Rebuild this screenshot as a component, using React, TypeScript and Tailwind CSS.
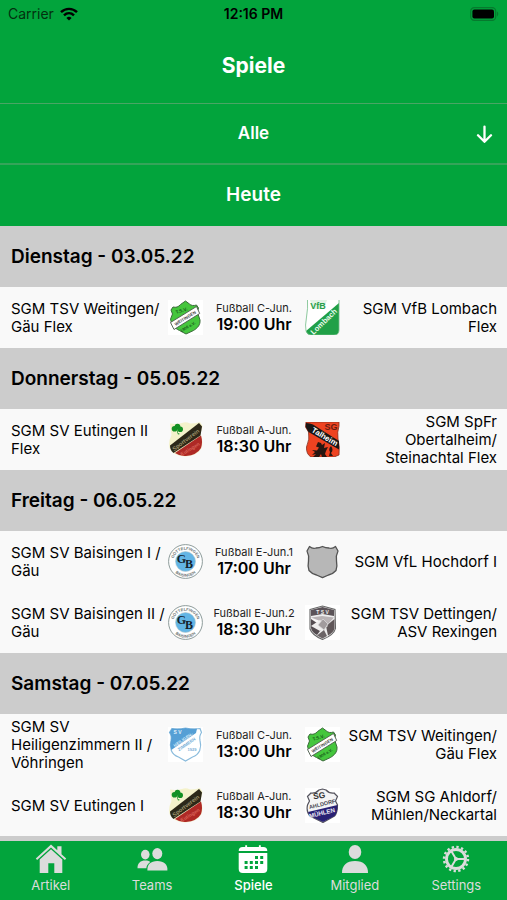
import type { ReactNode } from "react";

type Match = {
  home: string;
  away: string;
  homeCrest: ReactNode;
  awayCrest: ReactNode;
  league: string;
  time: string;
};

type Day = { title: string; matches: Match[] };

const days: Day[] = [
  {
    title: "Dienstag - 03.05.22",
    matches: [
      {
        home: "SGM TSV Weitingen/ Gäu Flex",
        away: "SGM VfB Lombach Flex",
        homeCrest: <WeitingenCrest />,
        awayCrest: <LombachCrest />,
        league: "Fußball C-Jun.",
        time: "19:00 Uhr",
      },
    ],
  },
  {
    title: "Donnerstag - 05.05.22",
    matches: [
      {
        home: "SGM SV Eutingen II Flex",
        away: "SGM SpFr Obertalheim/ Steinachtal Flex",
        homeCrest: <EutingenCrest />,
        awayCrest: <TalheimCrest />,
        league: "Fußball A-Jun.",
        time: "18:30 Uhr",
      },
    ],
  },
  {
    title: "Freitag - 06.05.22",
    matches: [
      {
        home: "SGM SV Baisingen I / Gäu",
        away: "SGM VfL Hochdorf I",
        homeCrest: <BaisingenCrest id="baisingen-1" />,
        awayCrest: <EmptyCrest />,
        league: "Fußball E-Jun.1",
        time: "17:00 Uhr",
      },
      {
        home: "SGM SV Baisingen II / Gäu",
        away: "SGM TSV Dettingen/ ASV Rexingen",
        homeCrest: <BaisingenCrest id="baisingen-2" />,
        awayCrest: <DettingenCrest />,
        league: "Fußball E-Jun.2",
        time: "18:30 Uhr",
      },
    ],
  },
  {
    title: "Samstag - 07.05.22",
    matches: [
      {
        home: "SGM SV Heiligenzimmern II / Vöhringen",
        away: "SGM TSV Weitingen/ Gäu Flex",
        homeCrest: <HeiligenzimmernCrest />,
        awayCrest: <WeitingenCrest />,
        league: "Fußball C-Jun.",
        time: "13:00 Uhr",
      },
      {
        home: "SGM SV Eutingen I",
        away: "SGM SG Ahldorf/ Mühlen/Neckartal",
        homeCrest: <EutingenCrest />,
        awayCrest: <AhldorfCrest />,
        league: "Fußball A-Jun.",
        time: "18:30 Uhr",
      },
    ],
  },
];

const tabs = [
  { label: "Artikel", icon: <HomeIcon /> },
  { label: "Teams", icon: <PeopleIcon /> },
  { label: "Spiele", icon: <CalendarIcon />, active: true },
  { label: "Mitglied", icon: <PersonIcon /> },
  { label: "Settings", icon: <SettingsIcon /> },
];

export default function App() {
  return (
    <div className="flex h-screen flex-col overflow-hidden bg-[#cccccc] font-['Inter','Liberation_Sans',sans-serif] text-black">
      <header className="shrink-0 bg-[#02a43c] text-white">
        <StatusBar />
        <h1 className="flex h-[75px] items-center justify-center text-[21px] font-bold">
          Spiele
        </h1>
        <button
          type="button"
          aria-haspopup="listbox"
          className="grid h-[60px] w-full grid-cols-[1fr_auto_1fr] items-center border-t border-[#4aa565] px-[14px] text-[17px] font-semibold"
        >
          <span className="col-start-2">Alle</span>
          <ArrowDown />
        </button>
        <button
          type="button"
          className="h-[63px] w-full border-t-2 border-[#35a45a] text-[19px] font-semibold"
        >
          Heute
        </button>
      </header>

      <main className="min-h-0 flex-1 overflow-hidden">
        {days.map((day) => (
          <section key={day.title}>
            <h2 className="flex h-[61px] items-center px-[11px] pt-0.5 text-[19px] font-semibold">
              {day.title}
            </h2>
            <ul className="bg-[#f9f9f9]">
              {day.matches.map((match) => (
                <MatchRow key={match.home} match={match} />
              ))}
            </ul>
          </section>
        ))}
      </main>

      <nav className="grid h-[59px] shrink-0 grid-cols-5 bg-[#02a43c]">
        {tabs.map(({ label, icon, active }) => (
          <a
            key={label}
            href={`#${label.toLowerCase()}`}
            aria-current={active ? "page" : undefined}
            className={`flex flex-col items-center gap-0.5 pt-0.5 text-[13px] leading-4 ${
              active ? "font-medium text-white" : "text-[#dcdcdc]"
            }`}
          >
            {icon}
            {label}
          </a>
        ))}
      </nav>
    </div>
  );
}

function MatchRow({ match }: { match: Match }) {
  return (
    <li className="flex h-[61px] items-center pr-[10px] pl-[11px] text-[15px] leading-[18px]">
      <p className="flex-1">{match.home}</p>
      {match.homeCrest}
      <div className="w-[102px] pb-[3px] text-center whitespace-nowrap">
        <p className="text-[11px] leading-4 text-[#222]">{match.league}</p>
        <p className="text-base leading-4 font-semibold">{match.time}</p>
      </div>
      {match.awayCrest}
      <p className="flex-1 text-right">{match.away}</p>
    </li>
  );
}

function StatusBar() {
  return (
    <div className="grid h-7 grid-cols-3 items-center px-2 text-sm text-black">
      <div className="flex items-center gap-1.5">
        <span className="text-[#03300f]">Carrier</span>
        <svg width="18" height="14" viewBox="0 0 18 14" fill="none" stroke="currentColor" strokeWidth="2.4">
          <path d="M1 5.2C5.6.7 12.4.7 17 5.2" />
          <path d="M4 8.4c2.9-2.8 7.1-2.8 10 0" />
          <path d="M6.4 10.9c1.6-1.5 3.6-1.5 5.2 0L9 13.6z" fill="currentColor" stroke="none" />
        </svg>
      </div>
      <span className="text-center font-semibold">12:16 PM</span>
      <svg className="justify-self-end" width="29" height="14" viewBox="0 0 29 14">
        <rect x="0.7" y="0.7" width="25" height="12.6" rx="3.6" fill="none" stroke="#067a2e" strokeWidth="1.2" />
        <rect x="2.4" y="2.4" width="21.6" height="9.2" rx="2" />
        <path d="M27 4.6c1.7.8 1.7 4 0 4.8z" fill="#067a2e" />
      </svg>
    </div>
  );
}

function ArrowDown() {
  return (
    <svg
      className="justify-self-end"
      width="17"
      height="18"
      viewBox="0 0 17 18"
      fill="none"
      stroke="currentColor"
      strokeWidth="2.3"
      strokeLinecap="round"
      strokeLinejoin="round"
    >
      <path d="M8.5 1.6v15M2 10.2l6.5 6.6 6.5-6.6" />
    </svg>
  );
}

function TabIcon({ children }: { children: ReactNode }) {
  return (
    <svg width="32" height="32" viewBox="0 0 32 32" fill="currentColor" aria-hidden="true">
      {children}
    </svg>
  );
}

function HomeIcon() {
  return (
    <TabIcon>
      <path d="M16 1.600 22.300 7.300V3.200h4.200v8L31.200 15.400 29.900 16.900 16 4.400 2.100 16.900.8 15.400z" />
      <path d="M16 6.200 27.300 16.400V30H19.300V20.200H13.300V30H4.700V16.400z" />
    </TabIcon>
  );
}

function PeopleIcon() {
  return (
    <TabIcon>
      <ellipse cx="9.300" cy="11.600" rx="4.300" ry="4.800" />
      <path d="M1.500 25.200c0-5 3-7.600 7.800-7.600 2 0 3.700.5 5 1.400-2.300 1.500-3.600 3.500-4 6.200z" />
      <ellipse cx="21.300" cy="10.600" rx="5" ry="5.600" />
      <path d="M11.400 27.400c-.4-5.700 3.200-9.300 9.900-9.300s10.500 3.600 10.100 9.300z" />
    </TabIcon>
  );
}

function CalendarIcon() {
  return (
    <TabIcon>
      <path d="M8.200 2.200h1.900V4h11.800V2.200h1.900V4h2.500q4 0 4 4H1.700q0-4 4-4h2.500z" />
      <path
        fillRule="evenodd"
        d="M1.700 10h28.600v16q0 4-4 4H5.700q-4 0-4-4zM18 13v3h3v-3zm5.200 0v3h3v-3zM7.600 18v3h3v-3zm5.200 0v3h3v-3zm5.200 0v3h3v-3zm5.200 0v3h3v-3zM7.600 23v3h3v-3zm5.200 0v3h3v-3zm5.200 0v3h3v-3z"
      />
    </TabIcon>
  );
}

function PersonIcon() {
  return (
    <TabIcon>
      <ellipse cx="16" cy="9" rx="6.300" ry="7" />
      <path d="M3 30c-.2-7.400 4.600-12 13-12s13.200 4.600 13 12z" />
    </TabIcon>
  );
}

function SettingsIcon() {
  return (
    <TabIcon>
      <g fill="none" stroke="currentColor">
        <circle cx="16" cy="16" r="12" strokeWidth="2.400" strokeDasharray="2.350 2.362" />
        <circle cx="16" cy="16" r="9.500" strokeWidth="2.900" />
        <path d="M16 16h9M16 16l-4.700-8M16 16l-4.700 8" strokeWidth="2" />
      </g>
      <circle cx="16" cy="16" r="2" />
    </TabIcon>
  );
}

function Crest({ label, children }: { label: string; children: ReactNode }) {
  return (
    <svg
      role="img"
      aria-label={label}
      className="shrink-0 font-['Liberation_Sans',sans-serif] font-bold"
      width="35"
      height="35"
      viewBox="0 0 35 35"
      textAnchor="middle"
    >
      {children}
    </svg>
  );
}

function WeitingenCrest() {
  return (
    <Crest label="TSV Weitingen">
      <rect width="35" height="35" fill="#fff" />
      <path
        d="M5 7c3 .8 5.500 0 7.500-2.500L17.500 1l4 3c1.500 1.500 4 2 7 1l2 3-1.200 4 2.700 8c.5 5-2.500 8-6.500 10.500L18 34l-6.500-3.500C6 28 3 24 2.600 19L4.500 14 3 10z"
        fill="#45c63d"
        stroke="#3c6b3b"
        strokeWidth="1"
      />
      <path d="M2.500 22.500 28.500 6.500l3.200 7L6 29.500z" fill="#fff" stroke="#4b5a4b" strokeWidth=".9" />
      <text transform="translate(18 19.500) rotate(-32)" fontSize="4.300" fill="#444">WEITINGEN</text>
      <text transform="translate(14 12) rotate(-18)" fontSize="4.600" fill="#185a1b">T.S.V.</text>
      <text transform="translate(20.500 28) rotate(-30)" fontSize="4" fill="#185a1b">1906 e.V.</text>
    </Crest>
  );
}

function LombachCrest() {
  return (
    <Crest label="VfB Lombach">
      <path d="M2.500 0H34v30q0 5-5 5H6q-6 0-5.400-7Q1.200 22 2.500 17z" fill="#fff" />
      <path d="M34 3v27q0 5-5 5H6q-4 0-5-4Z" fill="#20a047" />
      <path d="M2.500 0q.6 8-1 17T1 31q1.300 4 5 4h23q5 0 5-5V0" fill="none" stroke="#72bd88" strokeWidth=".8" />
      <path d="M5 0h17l-3 9H8z" fill="#e3f3e6" />
      <text x="13" y="9" fontSize="9" fill="#2aa04b">VfB</text>
      <text transform="translate(20.500 23.500) rotate(-44)" fontSize="7.500" fill="#e8faeb">Lombach</text>
    </Crest>
  );
}

function EutingenCrest() {
  return (
    <Crest label="SV Eutingen">
      <path
        d="M2 1.500Q8 2.500 14 1q4-1.500 8 .5 5 0 10-1.500l2.500 4-2 8q3.500 9 .5 15-4 7-15.500 7.500Q5 34 1.500 26 0 20 3.500 13z"
        fill="#f4f2cb"
      />
      <path d="M33 13.500 7 31q5 3.500 11 3Q29 33 33 26q2-6 0-12.500z" fill="#ae2925" />
      <path d="M2 23.500 31 1l3 3.500-1.500 9L5.500 31Q2 28 2 23.500z" fill="#2c2818" />
      <g fill="#139022">
        <circle cx="9.500" cy="4.500" r="2.800" />
        <circle cx="6.500" cy="6.800" r="2.800" />
        <circle cx="12.200" cy="7.200" r="2.800" />
        <path d="m9 5 1 6 2 1-2 .5L8 7z" />
      </g>
      <text transform="translate(19 19.500) rotate(-37)" fontSize="5.800" fill="#9b9069">Sportverein</text>
      <text transform="translate(23 28.500) rotate(-31)" fontSize="5" fill="#d76358">Eutingen</text>
    </Crest>
  );
}

function TalheimCrest() {
  return (
    <Crest label="SG Talheim">
      <path
        d="M1 0h33v4q-2 6-1 13 2 8 1 16l-5 2H6q-5-3-4.500-10Q5 17 3.500 10L.5 5z"
        fill="#ee4321"
        stroke="#872e1e"
        strokeWidth=".8"
      />
      <path d="M1 1q4 0 7 1.500L34 19v8.500L3.500 10 .8 5z" fill="#191717" />
      <text x="26" y="8" fontSize="9" fill="#651c11">SG</text>
      <text transform="translate(18.500 17) rotate(31)" fontSize="7.800" fill="#fff">Talheim</text>
      <path
        d="m13 20 3 1 1 2 3-2-1 5 4-1-2 4-1 3 2 3h-5l-1-3-2 3H8l3-3-4 1 3-3-3-2 5 .5 2-3-3-1zM26 24q3 4 0 7l2 3h-4l1-4q-2-3 1-6z"
        fill="#281712"
      />
    </Crest>
  );
}

function BaisingenCrest({ id }: { id: string }) {
  return (
    <Crest label="SV Baisingen">
      <defs>
        <path id={`${id}-top`} d="M5.200 18a12.300 12.300 0 0 1 24.600 0" />
        <path id={`${id}-bottom`} d="M2.300 17.500a15.200 15.200 0 0 0 30.400 0" />
      </defs>
      <circle cx="17.500" cy="17.500" r="16.900" fill="#fff" stroke="#819190" strokeWidth=".9" />
      <circle cx="17.500" cy="17.500" r="10" fill="#62b5e5" stroke="#b4c8cc" strokeWidth=".6" />
      <text fontSize="4" fill="#68706f">
        <textPath href={`#${id}-top`} startOffset="50%">GÖTTELFINGEN</textPath>
      </text>
      <text fontSize="4" fill="#68706f">
        <textPath href={`#${id}-bottom`} startOffset="50%">BAISINGEN</textPath>
      </text>
      <text className="font-['Liberation_Serif',serif]" fontSize="12" fill="#14212b">
        <tspan x="13.500" y="18.500">G</tspan>
        <tspan x="21" y="24">B</tspan>
      </text>
    </Crest>
  );
}

function EmptyCrest() {
  return (
    <Crest label="Kein Wappen">
      <path
        d="M4.500 2.500q3 2.500 6.500 1.500Q14.500 4 17.500 2.500 20.500 4 24 4q3.500 1 6.500-1.500L33 7q-2.500 5-1.500 10 1 5-.5 9.500-3 3.500-7.500 4.500l-6 2.700-6-2.700Q7 30 4 26.500 2.500 22 3.500 17 4.500 12 2 7z"
        fill="#b7b7b7"
        stroke="#535353"
        strokeWidth="1.300"
        strokeLinejoin="round"
      />
    </Crest>
  );
}

function DettingenCrest() {
  return (
    <Crest label="TSV Dettingen">
      <rect width="35" height="35" fill="#fff" />
      <path d="M5 4.500 17.500 1 30 4.500l.5 19Q29 30 17.500 34.500 7 30 5 24z" fill="#eee" stroke="#666" strokeWidth="1.100" />
      <path d="M6 5 17.500 2 29 5v6L17.500 9 6 11z" fill="#5b5358" />
      <text x="17.500" y="8.500" fontSize="5" fill="#eee">T S V</text>
      <path d="M6 13.500 14 15l4 5-8 6-4-2z" fill="#faf8f8" />
      <path d="M6 12.500 17 11l12 1.500-6 6.500z" fill="#b9b3b5" />
      <path d="M6 14 18 22 12 30Q6.500 27 6 23z" fill="#554d51" />
      <path d="m21 21 8.500-7v9.500q-1 4-6.500 7z" fill="#605759" />
      <path d="m6 21 9-6 8 6-8 5z" fill="#f0eeee" />
      <path d="m18 14 5 5-4 6-6-5z" fill="#a19b9d" stroke="#ddd" strokeWidth=".7" />
      <path d="M12 30.500 19 25l3 6-4.500 2.500z" fill="#6b6466" />
    </Crest>
  );
}

function HeiligenzimmernCrest() {
  return (
    <Crest label="SV Heiligenzimmern">
      <rect width="35" height="35" fill="#fff" />
      <path
        d="M4 1.500q6 1 13.500-.5Q26 2.500 32 1.500l1.500 4Q31 9 32 13.500q1.500 5-.3 10-2.200 5-7.200 6.500l-7 4-7-4Q5 28 3.300 23.500q-1.800-5-.3-10Q4 9 1.500 5.500z"
        fill="#fff"
        stroke="#8abbdc"
        strokeWidth="1.200"
      />
      <path d="M4 1.500q6 1 13.500-.5Q24 2.300 29 1.800L28 6 3.300 23q-1.800-5-.3-9.500Q4 9 1.500 5.500z" fill="#559fd5" />
      <text x="9.500" y="7" fontSize="5" fill="#e0f0fa">S V</text>
      <text transform="translate(16 14) rotate(-34)" fontSize="4.400" fill="#dbedf9">HEILIGEN-</text>
      <text transform="translate(19.500 18.500) rotate(-34)" fontSize="4.400" fill="#75aed6">ZIMMERN</text>
      <text x="24" y="24" fontSize="4" fill="#75aed6">1929</text>
    </Crest>
  );
}

function AhldorfCrest() {
  return (
    <Crest label="SG Ahldorf Mühlen">
      <rect width="35" height="35" fill="#fff" />
      <path
        d="M6 5q5 .5 8-3l3.500-1L21 2q3 3.500 8 3l3.500 3.500-2 4.500 2 4q0 8-3 11L18 34.500 5 28Q1 24 2.500 17l2-4-2-4.500z"
        fill="#f4f4f5"
        stroke="#55545e"
        strokeWidth="1.200"
      />
      <path d="m3 24 29.500-7q0 8-3 11L18 34 5 28z" fill="#292174" />
      <text transform="translate(14.500 10.500) rotate(-7)" fontSize="8.500" fill="#333">SG</text>
      <text transform="translate(17.500 18) rotate(-13)" fontSize="5.500" fill="#464650">AHLDORF</text>
      <text transform="translate(17.500 27) rotate(-14)" fontSize="6.200" fill="#e9e8f4">MÜHLEN</text>
    </Crest>
  );
}
